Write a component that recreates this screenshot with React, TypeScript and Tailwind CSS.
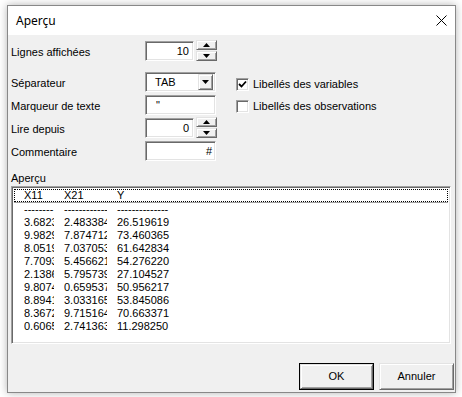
import React from 'react';

const sunken =
  'bg-white border border-t-[#a0a0a0] border-l-[#a0a0a0] border-r-white border-b-white shadow-[inset_1px_1px_0_#696969,inset_-1px_-1px_0_#e3e3e3]';
const raised =
  'bg-[#f0f0f0] border border-t-[#e3e3e3] border-l-[#e3e3e3] border-r-[#696969] border-b-[#696969] shadow-[inset_1px_1px_0_#ffffff,inset_-1px_-1px_0_#a0a0a0]';

const rows = [
  ['3.682345', '2.483384', '26.519619'],
  ['9.982911', '7.874712', '73.460365'],
  ['8.051937', '7.037053', '61.642834'],
  ['7.709312', '5.456621', '54.276220'],
  ['2.138654', '5.795739', '27.104527'],
  ['9.807412', '0.659537', '50.956217'],
  ['8.894120', '3.033165', '53.845086'],
  ['8.367256', '9.715164', '70.663371'],
  ['0.606543', '2.741363', '11.298250'],
];

const Arrow: React.FC<{ up?: boolean }> = ({ up }) => (
  <svg width="7" height="4" viewBox="0 0 7 4">
    <path d={up ? 'M3.5 0L7 4H0Z' : 'M0 0H7L3.5 4Z'} fill="#000" />
  </svg>
);

const Spin: React.FC = () => (
  <div className="ml-[2px] flex h-[21px] w-[21px] flex-col -mt-[1px]">
    <div className={`${raised} flex h-[10px] items-center justify-center`}>
      <Arrow up />
    </div>
    <div className={`${raised} mt-[1px] flex h-[10px] items-center justify-center`}>
      <Arrow />
    </div>
  </div>
);

const Row: React.FC<{ label: string; className?: string; children: React.ReactNode }> = ({ label, className, children }) => (
  <div className={`flex h-[20px] items-center ${className ?? ''}`}>
    <div className="w-[134px] pt-[2px]">{label}</div>
    {children}
  </div>
);

const Check: React.FC<{ checked?: boolean; label: string; className?: string }> = ({ checked, label, className }) => (
  <div className={`flex h-[13px] items-center ${className ?? ''}`}>
    <div className={`${sunken} flex h-[13px] w-[13px] items-center justify-center`}>
      {checked && (
        <svg width="9" height="9" viewBox="0 0 9 9">
          <path d="M1 4L3.5 6.5L8 1.5" stroke="#000" strokeWidth="1.8" fill="none" />
        </svg>
      )}
    </div>
    <span className="ml-[4px]">{label}</span>
  </div>
);

const Cells: React.FC<{ a: string; b: string; c: string }> = ({ a, b, c }) => (
  <div className="flex h-[13px] items-center whitespace-nowrap leading-[13px]">
    <div className="ml-[10px] w-[30px] overflow-hidden">{a}</div>
    <div className="ml-[10px] w-[43px] overflow-hidden">{b}</div>
    <div className="ml-[10px]">{c}</div>
  </div>
);

export default function App() {
  return (
    <div className="h-[397px] w-[462px] overflow-hidden bg-white pl-[7px] pt-[5px] font-['Liberation_Sans',Arial,sans-serif] text-[11px] text-black">
      <div className="flex h-[388px] w-[449px] flex-col border border-[#888] shadow-[0_0_8px_rgba(0,0,0,0.3)]">
        {/* title bar */}
        <div className="flex h-[29px] items-center justify-between bg-white pl-[8px] pr-[8px]">
          <span className="font-['Noto_Sans',sans-serif] text-[12px]">Aperçu</span>
          <svg width="11" height="11" viewBox="0 0 11 11">
            <path d="M0.5 0.5L10.5 10.5M10.5 0.5L0.5 10.5" stroke="#000" strokeWidth="1" />
          </svg>
        </div>

        <div className="flex flex-1 flex-col bg-[#f0f0f0] pl-[3px] pr-[1px]">
          <div className="flex">
            <div className="flex w-[208px] flex-col">
              <Row label="Lignes affichées" className="mt-[6px]">
                <div className={`${sunken} flex h-[20px] w-[49px] items-center justify-end pr-[4px]`}>10</div>
                <Spin />
              </Row>
              <Row label="Séparateur" className="mt-[11px]">
                <div className={`${sunken} flex h-[20px] w-[71px] items-center pr-[2px]`}>
                  <span className="flex-1 pl-[9px]">TAB</span>
                  <div className={`${raised} flex h-[16px] w-[15px] items-center justify-center`}>
                    <Arrow />
                  </div>
                </div>
              </Row>
              <Row label="Marqueur de texte" className="mt-[3px]">
                <div className={`${sunken} flex h-[20px] w-[71px] items-center pl-[10px]`}>"</div>
              </Row>
              <Row label="Lire depuis" className="mt-[3px]">
                <div className={`${sunken} flex h-[20px] w-[49px] items-center justify-end pr-[4px]`}>0</div>
                <Spin />
              </Row>
              <Row label="Commentaire" className="mt-[3px]">
                <div className={`${sunken} flex h-[20px] w-[71px] items-center justify-end pr-[3px]`}>#</div>
              </Row>
            </div>
            <div className="ml-[17px] mt-[43px] flex flex-col">
              <Check checked label="Libellés des variables" />
              <Check label="Libellés des observations" className="mt-[9px]" />
            </div>
          </div>

          <div className="mt-[10px] h-[14px] leading-[14px]">Aperçu</div>
          <div className={`${sunken} mt-[1px] h-[158px] w-[440px] p-[2px]`}>
            <div className="border border-dotted border-black">
              <div className="-m-px">
                <Cells a="X11" b="X21" c="Y" />
              </div>
            </div>
            <div className="h-px bg-[#a0a0a0]" />
            <Cells a="--------" b="------------" c="--------------" />
            {rows.map((r, i) => (
              <Cells key={i} a={r[0]} b={r[1]} c={r[2]} />
            ))}
          </div>

          <div className="mt-[19px] flex justify-end gap-[5px]">
            <div className="h-[27px] w-[75px] border border-black">
              <div className={`${raised} flex h-full w-full items-center justify-center`}>OK</div>
            </div>
            <div className={`${raised} flex h-[27px] w-[75px] items-center justify-center`}>Annuler</div>
          </div>
        </div>
      </div>
    </div>
  );
}
